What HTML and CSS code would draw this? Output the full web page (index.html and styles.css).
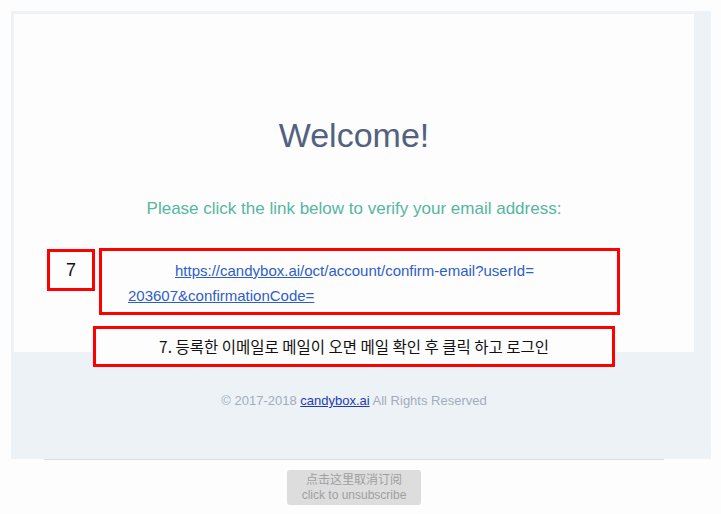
FILE: index.html
```html
<!DOCTYPE html>
<html lang="en">
<head>
    <meta charset="UTF-8">
    <meta name="viewport" content="width=device-width, initial-scale=1.0">
    <title>Confirm your email</title>
    <link rel="stylesheet" href="styles.css">
</head>
<body>
    <div class="mail">
        <div class="card">
            <h1 class="title">Welcome!</h1>
            <p class="lead">Please click the link below to verify your email address:</p>
            <p class="verify"><a href="#" class="verify-link">https://candybox.ai/o</a><span class="verify-rest">ct/account/confirm-email?userId=</span><br><a href="#" class="verify-link">203607&amp;confirmationCode=</a></p>
        </div>
        <div class="foot">
            &copy; 2017-2018 <a href="#" class="foot-link">candybox.ai</a> All Rights Reserved
        </div>

        <div class="note note-num">7</div>
        <div class="note note-link"></div>
        <div class="note note-ko">7. 등록한 이메일로 메일이 오면 메일 확인 후 클릭 하고 로그인</div>
    </div>

    <div class="bottom">
        <hr class="rule">
        <a href="#" class="unsub">点击这里取消订阅<br>click to unsubscribe</a>
    </div>
</body>
</html>
```

FILE: styles.css
```css
body {
    margin: 0;
    padding: 11px;
    background: #fdfdfd;
    font-family: "Liberation Sans", Arial, sans-serif;
}
.mail {
    position: relative;
    width: 680px;
    padding: 3px 17px 0 3px;
    background: #edf2f7;
}
.card {
    height: 338px;
    box-sizing: border-box;
    padding-top: 100px;
    background: #fdfdfd;
}
.title {
    margin: 0;
    text-align: center;
    font-size: 34px;
    font-weight: normal;
    line-height: 42px;
    color: #526180;
}
.lead {
    margin: 43px 0 0;
    text-align: center;
    font-size: 17px;
    line-height: 20px;
    color: #56b6a1;
}
.verify {
    margin: 39px 0 0;
    padding: 0 100px 0 114px;
    text-indent: 47px;
    font-size: 15px;
    line-height: 25px;
}
.verify-link {
    color: #2e5ec9;
}
.verify-rest {
    color: #2e5ec9;
}
.foot {
    height: 107px;
    box-sizing: border-box;
    padding-top: 41px;
    text-align: center;
    font-size: 13px;
    color: #a3adba;
}
.foot-link {
    color: #1d3bb8;
}
.note {
    position: absolute;
    box-sizing: border-box;
    border: 3px solid #ff0000;
}
.note-num {
    left: 36px;
    top: 238px;
    width: 48px;
    height: 42px;
    padding-top: 8px;
    text-align: center;
    font-size: 18px;
    color: #111;
}
.note-link {
    left: 88px;
    top: 237px;
    width: 521px;
    height: 67px;
}
.note-ko {
    left: 82px;
    top: 315px;
    width: 522px;
    height: 41px;
    padding-top: 8px;
    background: #fdfdfd;
    text-align: center;
    font-family: "Noto Sans CJK KR", sans-serif;
    font-size: 15.5px;
    line-height: 19px;
    color: #111;
}
.bottom {
    width: 680px;
    margin-left: 3px;
    text-align: center;
}
.rule {
    margin: 0 30px;
    border: none;
    border-top: 1px solid #dcdcdc;
}
.unsub {
    display: inline-block;
    margin-top: 10px;
    width: 134px;
    height: 35px;
    box-sizing: border-box;
    padding-top: 3px;
    border-radius: 3px;
    background: #dddddd;
    color: #a0a0a0;
    font-family: "Liberation Sans", "Noto Sans CJK SC", sans-serif;
    font-size: 12px;
    line-height: 15px;
    text-decoration: none;
}
```
